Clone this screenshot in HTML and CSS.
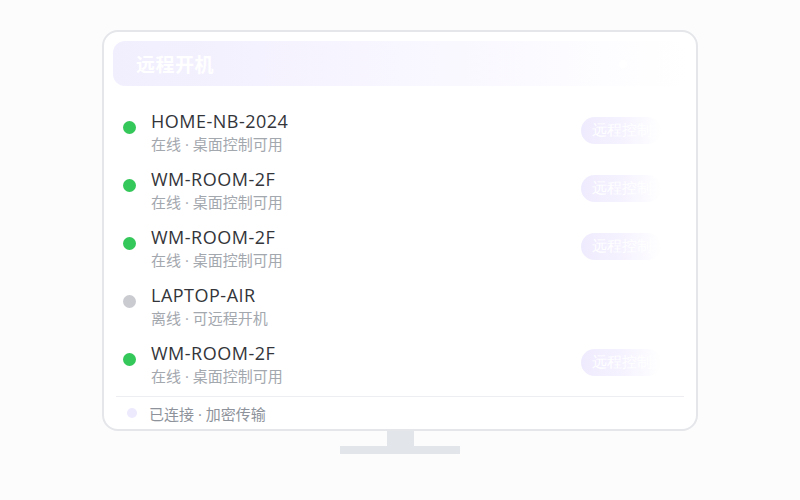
FILE: index.html
```html
<!DOCTYPE html>
<html lang="zh">
<head>
<meta charset="utf-8">
<link rel="stylesheet" href="styles.css">
</head>
<body>
<div class="scene">
  <div class="monitor">
    <div class="header">
      <span class="title">远程开机</span>
      <span class="hdot"></span>
    </div>
    <div class="list">
      <div class="row">
        <span class="dot on"></span>
        <div class="info"><div class="name">HOME-NB-2024</div><div class="sub">在线 · 桌面控制可用</div></div>
        <span class="btn">远程控制</span>
      </div>
      <div class="row">
        <span class="dot on"></span>
        <div class="info"><div class="name">WM-ROOM-2F</div><div class="sub">在线 · 桌面控制可用</div></div>
        <span class="btn">远程控制</span>
      </div>
      <div class="row">
        <span class="dot on"></span>
        <div class="info"><div class="name">WM-ROOM-2F</div><div class="sub">在线 · 桌面控制可用</div></div>
        <span class="btn">远程控制</span>
      </div>
      <div class="row">
        <span class="dot off"></span>
        <div class="info"><div class="name">LAPTOP-AIR</div><div class="sub">离线 · 可远程开机</div></div>
      </div>
      <div class="row">
        <span class="dot on"></span>
        <div class="info"><div class="name">WM-ROOM-2F</div><div class="sub">在线 · 桌面控制可用</div></div>
        <span class="btn">远程控制</span>
      </div>
    </div>
    <div class="footer">
      <span class="fdot"></span>
      <span class="ftext">已连接 · 加密传输</span>
    </div>
  </div>
  <div class="neck"></div>
  <div class="base"></div>
</div>
</body>
</html>
```
FILE: styles.css
```css
html, body {
  margin: 0;
  padding: 0;
  background: #fcfcfd;
  width: 800px;
  height: 500px;
  overflow: hidden;
  font-family: "Open Sans", "Noto Sans CJK SC", sans-serif;
}
.scene {
  display: flex;
  flex-direction: column;
  align-items: center;
  padding-top: 30px;
}
.monitor {
  box-sizing: border-box;
  width: 596px;
  height: 401px;
  border: 2px solid #e4e6ea;
  border-radius: 16px;
  background: #ffffff;
  padding: 9px 9px 0 9px;
  display: flex;
  flex-direction: column;
}
.header {
  height: 45px;
  border-radius: 12px;
  background: linear-gradient(90deg, #f1eefe 0%, #f8f6ff 50%, #ffffff 100%);
  display: flex;
  align-items: center;
  justify-content: space-between;
  padding: 0 60px 0 23px;
}
.title {
  font-family: "Noto Sans CJK SC", sans-serif;
  font-weight: 700;
  font-size: 19px;
  color: #ffffff;
  letter-spacing: 0.5px;
}
.hdot {
  width: 8px;
  height: 8px;
  border-radius: 50%;
  background: #ffffff;
}
.list {
  margin-top: 12px;
  display: flex;
  flex-direction: column;
}
.row {
  height: 58px;
  box-sizing: border-box;
  padding: 12px 0 0 10px;
  display: flex;
  align-items: flex-start;
}
.dot {
  width: 13px;
  height: 13px;
  border-radius: 50%;
  margin-top: 10.5px;
  margin-right: 15px;
  flex: none;
}
.dot.on { background: #34c759; }
.dot.off { background: #c9cbd1; }
.info {
  flex: 1;
}
.name {
  font-size: 18px;
  line-height: 23px;
  color: #33353a;
  letter-spacing: 0.5px;
}
.sub {
  font-family: "Open Sans", "Noto Sans CJK SC", sans-serif;
  font-size: 15px;
  line-height: 22px;
  color: #a3a7ae;
}
.btn {
  margin-top: 7px;
  margin-right: 26px;
  width: 80px;
  height: 27px;
  box-sizing: border-box;
  border-radius: 14px;
  padding-left: 11px;
  background: linear-gradient(90deg, #efebfe 0%, #f6f3ff 55%, rgba(255,255,255,0) 100%);
  color: #ffffff;
  font-family: serif;
  font-size: 15px;
  line-height: 27px;
  white-space: nowrap;
  overflow: hidden;
}
.footer {
  margin: 8px 3px 0 3px;
  border-top: 1px solid #eceef1;
  height: 32px;
  display: flex;
  align-items: center;
  padding-left: 11px;
}
.fdot {
  width: 10px;
  height: 10px;
  border-radius: 50%;
  background: #eeeafd;
  margin-right: 12px;
}
.ftext {
  font-family: "Open Sans", "Noto Sans CJK SC", sans-serif;
  font-size: 15px;
  color: #8e939b;
}
.neck {
  width: 27px;
  height: 15px;
  background: #e2e5e9;
}
.base {
  width: 120px;
  height: 8px;
  background: #e2e5e9;
}
```
